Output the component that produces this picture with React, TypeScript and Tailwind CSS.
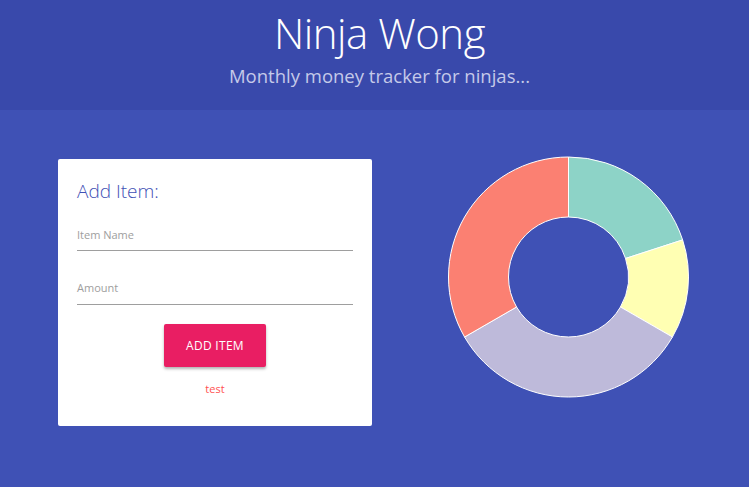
import React from "react";

const slices = [
  { value: 30, color: "#8dd3c7" },
  { value: 20, color: "#ffffb3" },
  { value: 50, color: "#bebada" },
  { value: 50, color: "#fb8072" },
];

const arc = (cx: number, cy: number, r: number, ro: number, a0: number, a1: number) => {
  const p = (r: number, a: number) => [cx + r * Math.sin(a), cy - r * Math.cos(a)];
  const [x0, y0] = p(ro, a0);
  const [x1, y1] = p(ro, a1);
  const [x2, y2] = p(r, a1);
  const [x3, y3] = p(r, a0);
  const big = a1 - a0 > Math.PI ? 1 : 0;
  return `M${x0} ${y0} A${ro} ${ro} 0 ${big} 1 ${x1} ${y1} L${x2} ${y2} A${r} ${r} 0 ${big} 0 ${x3} ${y3} Z`;
};

const Donut = () => {
  const total = slices.reduce((s, e) => s + e.value, 0);
  let start = 0;
  return (
    <svg width="318" height="250" viewBox="0 0 318 250">
      {slices.map((e, i) => {
        const a0 = start;
        const a1 = start + (e.value / total) * Math.PI * 2;
        start = a1;
        return <path key={i} d={arc(193.5, 121, 60, 120, a0, a1)} fill={e.color} stroke="#ffffff" strokeWidth="1" />;
      })}
    </svg>
  );
};

const App = () => {
  return (
    <div className="w-full min-h-[487px] bg-[#3f51b5]" style={{ fontFamily: "'Open Sans', sans-serif" }}>
      <header className="h-[110px] bg-[#3949ab] flex flex-col items-center pt-[7px] pl-[10px]">
        <h1 className="text-[42px] font-light text-white leading-[52px] tracking-[-0.5px]">Ninja Wong</h1>
        <p className="text-[18.5px] text-[#c5cae9] mt-[5px] leading-[24px]">Monthly money tracker for ninjas...</p>
      </header>

      <div className="w-[636px] mx-auto flex pt-[49px]">
        <div className="w-[318px] pl-[1.5px]">
          <div className="w-[314px] h-[267px] bg-white rounded-[2px] px-[19px] pt-[20px]">
            <h3 className="text-[19px] font-light text-[#3f51b5] leading-[24px]">Add Item:</h3>
            <div className="mt-[24px]">
              <div className="text-[11px] text-[#9e9e9e] leading-[16px]">Item Name</div>
              <div className="mt-[7px] h-px bg-[#9e9e9e]"></div>
            </div>
            <div className="mt-[29px]">
              <div className="text-[11px] text-[#9e9e9e] leading-[16px]">Amount</div>
              <div className="mt-[8px] h-px bg-[#9e9e9e]"></div>
            </div>
            <div className="flex flex-col items-center mt-[19px]">
              <button className="w-[102px] h-[43px] bg-[#e91e63] text-white text-[12px] rounded-[2px] shadow-[0_2px_3px_rgba(0,0,0,0.3)] tracking-[0.3px]">
                ADD ITEM
              </button>
              <p className="mt-[14px] text-[11px] text-[#ff5252] leading-[16px]">test</p>
            </div>
          </div>
        </div>
        <div className="w-[318px] -mt-[3px]">
          <Donut />
        </div>
      </div>
    </div>
  );
};

export default App;
